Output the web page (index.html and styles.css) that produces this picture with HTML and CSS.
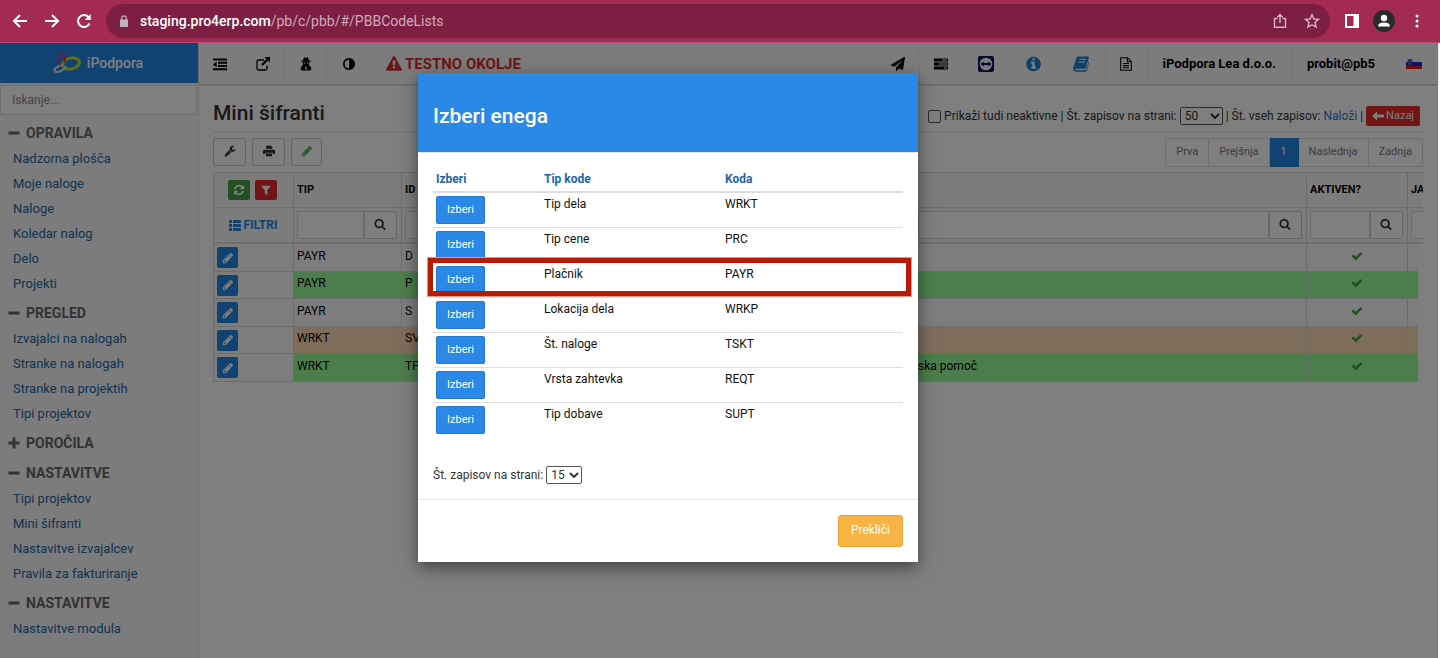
FILE: index.html
```html
<!DOCTYPE html>
<html lang="sl">
<head>
<meta charset="utf-8">
<title>Mini šifranti</title>
<link rel="stylesheet" href="styles.css">
</head>
<body>
<svg class="sprite" aria-hidden="true">
  <symbol id="pencil" viewBox="0 0 1792 1792"><path d="M491 1536l91-91-235-235-91 91v107h128v128h107zm523-928q0-22-22-22-10 0-17 7l-542 542q-7 7-7 17 0 22 22 22 10 0 17-7l542-542q7-7 7-17zm-54-192l416 416-832 832h-416v-416zm683 96q0 53-37 90l-166 166-416-416 166-165q36-38 90-38 53 0 91 38l235 234q37 39 37 91z"/></symbol>
  <symbol id="search" viewBox="0 0 1792 1792"><path d="M1216 832q0-185-131.5-316.5t-316.5-131.5-316.5 131.5-131.5 316.5 131.5 316.5 316.5 131.5 316.5-131.5 131.5-316.5zm512 832q0 52-38 90t-90 38q-54 0-90-38l-343-342q-179 124-399 124-143 0-273.5-55.5t-225-150-150-225-55.5-273.5 55.5-273.5 150-225 225-150 273.5-55.5 273.5 55.5 225 150 150 225 55.5 273.5q0 220-124 399l343 343q37 37 37 90z"/></symbol>
  <symbol id="check" viewBox="0 0 1792 1792"><path d="M1671 566q0 40-28 68l-724 724-136 136q-28 28-68 28t-68-28l-136-136-362-362q-28-28-28-68t28-68l136-136q28-28 68-28t68 28l294 295 656-657q28-28 68-28t68 28l136 136q28 28 28 68z"/></symbol>
  <symbol id="wrench" viewBox="0 0 1792 1792"><path d="M448 1472q0-26-19-45t-45-19-45 19-19 45 19 45 45 19 45-19 19-45zm644-420l-682 682q-37 37-90 37-52 0-91-37l-106-108q-38-36-38-90 0-53 38-91l681-681q39 98 114.5 173.5t173.5 114.5zm634-435q0 39-23 106-47 134-164.5 217.5t-258.5 83.5q-185 0-316.5-131.5t-131.5-316.5 131.5-316.5 316.5-131.5q58 0 121.5 16.5t107.5 46.5q16 11 16 28t-16 28l-293 169v224l193 107q5-3 79-48.5t135.5-81 70.5-35.5q15 0 23.5 10t8.5 25z"/></symbol>
  <symbol id="filter" viewBox="0 0 1792 1792"><path d="M1595 295q17 41-14 70l-493 493v742q0 42-39 59-13 5-25 5-27 0-45-19l-256-256q-19-19-19-45v-486l-493-493q-31-29-14-70 17-39 59-39h1280q42 0 59 39z"/></symbol>
  <symbol id="refresh" viewBox="0 0 1792 1792"><path d="M1639 1056q0 5-1 7-64 268-268 434.5t-478 166.5q-146 0-282.5-55t-243.5-157l-129 129q-19 19-45 19t-45-19-19-45v-448q0-26 19-45t45-19h448q26 0 45 19t19 45-19 45l-137 137q71 66 161 102t187 36q134 0 250-65t186-179q11-17 53-117 8-23 30-23h192q13 0 22.5 9.5t9.5 22.5zm25-800v448q0 26-19 45t-45 19h-448q-26 0-45-19t-19-45 19-45l138-138q-148-137-349-137-134 0-250 65t-186 179q-11 17-53 117-8 23-30 23h-199q-13 0-22.5-9.5t-9.5-22.5v-7q65-268 270-434.5t480-166.5q146 0 284 55.5t245 156.5l130-129q19-19 45-19t45 19 19 45z"/></symbol>
  <symbol id="warning" viewBox="0 0 1792 1792"><path d="M1024 1375v-190q0-14-9.5-23.5t-22.5-9.5h-192q-13 0-22.5 9.5t-9.5 23.5v190q0 14 9.5 23.5t22.5 9.5h192q13 0 22.5-9.5t9.5-23.5zm-2-374l18-459q0-12-10-19-13-11-24-11h-220q-11 0-24 11-10 7-10 21l17 457q0 10 10 16.5t24 6.5h185q14 0 23.5-6.5t10.5-16.5zm-14-934l768 1408q35 63-2 126-17 29-46.5 46t-63.5 17h-1536q-34 0-63.5-17t-46.5-46q-37-63-2-126l768-1408q17-31 47-49t65-18 65 18 47 49z"/></symbol>
  <symbol id="plane" viewBox="0 0 1792 1792"><path d="M1764 11q33 24 27 64l-256 1536q-5 29-32 45-14 8-31 8-11 0-24-5l-453-185-242 295q-18 23-49 23-13 0-22-4-19-7-30.5-23.5t-11.5-36.5v-349l864-1059-1069 925-395-162q-37-14-40-55-2-40 32-59l1664-960q15-9 32-9 20 0 36 11z"/></symbol>
  <symbol id="info" viewBox="0 0 1792 1792"><path d="M1152 1376v-160q0-14-9-23t-23-9h-96v-512q0-14-9-23t-23-9h-320q-14 0-23 9t-9 23v160q0 14 9 23t23 9h96v320h-96q-14 0-23 9t-9 23v160q0 14 9 23t23 9h448q14 0 23-9t9-23zm-128-896v-160q0-14-9-23t-23-9h-192q-14 0-23 9t-9 23v160q0 14 9 23t23 9h192q14 0 23-9t9-23zm640 416q0 209-103 385.5t-279.5 279.5-385.5 103-385.5-103-279.5-279.5-103-385.5 103-385.5 279.5-279.5 385.5-103 385.5 103 279.5 279.5 103 385.5z"/></symbol>
  <symbol id="contrast" viewBox="0 0 1792 1792"><path d="M896 1440v-1088q-148 0-273 73t-198 198-73 273 73 273 198 198 273 73zm768-544q0 209-103 385.5t-279.5 279.5-385.5 103-385.5-103-279.5-279.5-103-385.5 103-385.5 279.5-279.5 385.5-103 385.5 103 279.5 279.5 103 385.5z"/></symbol>
  <symbol id="outdent" viewBox="0 0 14 14"><path d="M0 1.500h14v2H0zM5 4.800h9v2H5zM5 8h9v2H5zM0 11.300h14v2H0zM0 7.400l3.600-2.800v5.600z"/></symbol>
  <symbol id="external" viewBox="0 0 14 14"><path d="M8.500 0H14v5.500L12 3.600 6.800 8.800 5.200 7.200 10.400 2z"/><path d="M8 3H2.500Q1 3 1 4.500v7Q1 13 2.500 13h7Q11 13 11 11.500V8.500" fill="none" stroke="currentColor" stroke-width="1.300"/></symbol>
  <symbol id="secret" viewBox="0 0 14 14"><path d="M4.500 1.200Q5 .3 7 .8 9 .3 9.500 1.200L10 3.500 12 4V4.800H2V4L4 3.500z"/><path d="M3.800 4.800h6.400v2.400L9.800 8.200Q12.300 9 12.300 12 12.300 13.500 10.800 13.500H3.200Q1.700 13.500 1.700 12 1.700 9 4.200 8.200L3.800 7.200z"/><path d="M4.600 5.700h1.800l-.4 1H5zM7.600 5.700h1.800l-.4 1H8zM6.500 9.500h1l.4 2.500-.9 1-.9-1z" fill="#f8f8f8"/></symbol>
  <symbol id="tasks" viewBox="0 0 14 12"><path d="M0 .5h14v3H0zM0 4.500h14v3H0zM0 8.500h14v3H0z"/><path d="M8 1.500h5v1H8zM5 5.500h8v1H5zM10 9.500h3v1h-3z" fill="#f8f8f8"/></symbol>
  <symbol id="viewer" viewBox="0 0 16 16"><rect width="16" height="16" rx="2" fill="#0c0c5c"/><circle cx="8" cy="8" r="6.300" fill="#f8f8f8"/><path d="M2.500 8l3.300-2.500V7h4.400V5.500L13.500 8l-3.300 2.500V9H5.800v1.500z" fill="#0c0c5c"/></symbol>
  <symbol id="book" viewBox="0 0 16 16"><path d="M5.500.5H15q1.200.2.800 1.500l-3 9.500q-.4 1.200-1.600 1.200H3q-1 0-1 .7 0 .8 1.200.8h9q.8 0 1-.8L16 4.500v2L13.800 14.500Q13.500 15.700 12 15.700H3Q.8 15.700.3 13.500q-.3-1 0-2L3.500 1.800Q4 .5 5.500.5z"/><path d="M6.300 3.300h7M5.400 6h7" stroke="#f8f8f8"/></symbol>
  <symbol id="doc" viewBox="0 0 12 14"><path d="M1 .7h6.500L11.300 4.500V13.300H.7V.7zM7.300.7v4h4M3 6.500h6M3 8.600h6M3 10.700h6" fill="none" stroke="currentColor" stroke-width="1.100"/></symbol>
  <symbol id="print" viewBox="0 0 14 14"><path d="M3.500 1h6l1.500 1.500V4.500H3.500zM1.500 5.500h11Q14 5.500 14 7v3.500h-2.500V9h-9v1.500H0V7Q0 5.500 1.500 5.500zM3.500 10h7v3h-7z"/></symbol>
  <symbol id="list" viewBox="0 0 12 11"><path d="M0 0h3v3H0zM4 0h8v3H4zM0 4h3v3H0zM4 4h8v3H4zM0 8h3v3H0zM4 8h8v3H4z"/></symbol>
  <symbol id="back" viewBox="0 0 12 10"><path d="M0 5l5-4.500v3h7v3H5v3z"/></symbol>
  <symbol id="minus" viewBox="0 0 12 12"><path d="M1 4.500h10q.5 0 .5.500v2q0 .5-.5.500H1q-.5 0-.5-.5V5q0-.5.500-.5z"/></symbol>
  <symbol id="plus" viewBox="0 0 12 12"><path d="M4.500.5h3v4h4v3h-4v4h-3v-4h-4v-3h4z"/></symbol>
</svg>

<header class="browser">
  <button class="chrome-btn" aria-label="Nazaj"><svg viewBox="0 0 16 16"><path d="M15 8H2M8 2L2 8l6 6"/></svg></button>
  <button class="chrome-btn" aria-label="Naprej"><svg viewBox="0 0 16 16"><path d="M1 8h13M8 2l6 6-6 6"/></svg></button>
  <button class="chrome-btn" aria-label="Osveži"><svg viewBox="0 0 16 16"><path d="M13.500 10.500A6 6 0 1 1 12.500 4L14 5.600"/><path d="M14.700 1v6h-6z" fill="#fff" stroke="none"/></svg></button>
  <div class="address">
    <svg class="lock" viewBox="0 0 8 12"><path d="M0 4.500h8V12H0z" fill="#b9b3ba"/><path d="M1.800 5V3a2.200 2.200 0 0 1 4.400 0v2" fill="none" stroke="#b9b3ba" stroke-width="1.200"/></svg>
    <span class="url"><span class="host">staging.pro4erp.com</span>/pb/c/pbb/#/PBBCodeLists</span>
    <button class="pill-btn" aria-label="Deli"><svg viewBox="0 0 14 16"><path d="M4.500 5.500h-3v8.700h11V5.500h-3M7 10V2M4.300 4.200L7 1.500l2.700 2.700" /></svg></button>
    <button class="pill-btn" aria-label="Zaznamek"><svg viewBox="0 0 16 16"><path d="M8 1.700l1.900 4.300 4.700.4-3.600 3.100 1.100 4.600L8 11.700l-4.100 2.400L5 9.500 1.400 6.400 6.100 6z"/></svg></button>
  </div>
  <button class="chrome-btn panel" aria-label="Stranska plošča"><svg viewBox="0 0 14 14"><path d="M1 1h12v12H1z"/><path d="M8.500 0H14v14H8.500z" fill="#fff" stroke="none"/></svg></button>
  <button class="avatar" aria-label="Profil"><svg viewBox="0 0 22 22"><circle cx="11" cy="11" r="11" fill="#2b2b2d"/><circle cx="11" cy="8" r="3.200" fill="#fff"/><path d="M5 16.500q0-4 6-4t6 4z" fill="#fff"/></svg></button>
  <button class="chrome-btn dots" aria-label="Meni"><svg viewBox="0 0 4 14"><g fill="#fff" stroke="none"><circle cx="2" cy="2" r="1.500"/><circle cx="2" cy="7" r="1.500"/><circle cx="2" cy="12" r="1.500"/></g></svg></button>
</header>

<div class="app">
  <aside class="sidebar">
    <a class="brand" href="#">
      <svg viewBox="0 0 28 20"><ellipse cx="18" cy="10.500" rx="8.500" ry="5.500" transform="rotate(-14 18 10.500)" fill="none" stroke="#c4d82c" stroke-width="3"/><path d="M13 13C11 18 5 20 2 18.500 0 16.500 4 12.500 10 12" fill="none" stroke="#e4e8ec" stroke-width="2"/><path d="M7.500 12C4 8 4.500 1.500 8.500 1.200c3.500 0 4 3 3 7.800" fill="none" stroke="#d43a74" stroke-width="2"/></svg>
      iPodpora
    </a>
    <input class="side-search" type="text" placeholder="Iskanje..." aria-label="Iskanje">
    <nav class="menu">
      <h2><svg><use href="#minus"/></svg>OPRAVILA</h2>
      <a href="#">Nadzorna plošča</a><a href="#">Moje naloge</a><a href="#">Naloge</a><a href="#">Koledar nalog</a><a href="#">Delo</a><a href="#">Projekti</a>
      <h2><svg><use href="#minus"/></svg>PREGLED</h2>
      <a href="#">Izvajalci na nalogah</a><a href="#">Stranke na nalogah</a><a href="#">Stranke na projektih</a><a href="#">Tipi projektov</a>
      <h2><svg><use href="#plus"/></svg>POROČILA</h2>
      <h2><svg><use href="#minus"/></svg>NASTAVITVE</h2>
      <a href="#">Tipi projektov</a><a href="#">Mini šifranti</a><a href="#">Nastavitve izvajalcev</a><a href="#">Pravila za fakturiranje</a>
      <h2><svg><use href="#minus"/></svg>NASTAVITVE</h2>
      <a href="#">Nastavitve modula</a>
    </nav>
  </aside>

  <div class="content">
    <nav class="topbar">
      <a href="#" aria-label="Skrij meni"><svg class="i14"><use href="#outdent"/></svg></a>
      <a href="#" aria-label="Odpri"><svg class="i14"><use href="#external"/></svg></a>
      <a href="#" aria-label="Uporabnik"><svg class="i14"><use href="#secret"/></svg></a>
      <a href="#" aria-label="Kontrast"><svg class="i14"><use href="#contrast"/></svg></a>
      <span class="env"><svg class="i16"><use href="#warning"/></svg>TESTNO OKOLJE</span>
      <a href="#" aria-label="Pošlji"><svg class="i14"><use href="#plane"/></svg></a>
      <a href="#" aria-label="Opravila"><svg class="i14"><use href="#tasks"/></svg></a>
      <a href="#" class="wide" aria-label="Oddaljena pomoč"><svg class="i16"><use href="#viewer"/></svg></a>
      <a href="#" class="wide blue" aria-label="Informacije"><svg class="i18"><use href="#info"/></svg></a>
      <a href="#" class="wide blue" aria-label="Priročnik"><svg class="i16"><use href="#book"/></svg></a>
      <a href="#" aria-label="Dokument"><svg class="i14"><use href="#doc"/></svg></a>
      <a href="#" class="wide">iPodpora Lea d.o.o.</a>
      <a href="#" class="wide">probit@pb5</a>
      <a href="#" aria-label="Slovenščina"><svg class="flag" viewBox="0 0 16 11"><path d="M0 0h16v4H0z" fill="#f0f0f0"/><path d="M0 4h16v4H0z" fill="#1030d0"/><path d="M0 8h16v3H0z" fill="#e01818"/><path d="M2 1.500h4v3.500q0 1.500-2 2.500-2-1-2-2.500z" fill="#4060d8" stroke="#e01818" stroke-width=".5"/></svg></a>
    </nav>

    <main class="main">
      <div class="title-row">
        <h1>Mini šifranti</h1>
        <div class="options">
          <input type="checkbox" id="inactive"><label for="inactive">Prikaži tudi neaktivne</label>
          <span>|</span>
          <label for="per-page">Št. zapisov na strani:</label>
          <span class="select"><select id="per-page"><option>50</option></select><svg viewBox="0 0 10 6"><path d="M1 1l4 4 4-4"/></svg></span>
          <span>| Št. vseh zapisov:</span>
          <a href="#">Naloži</a>
          <span>|</span>
          <button class="back"><svg><use href="#back"/></svg>Nazaj</button>
        </div>
      </div>

      <div class="tools">
        <div class="tool-btns">
          <button aria-label="Nastavitve"><svg><use href="#wrench"/></svg></button>
          <button aria-label="Natisni"><svg><use href="#print"/></svg></button>
          <button class="edit" aria-label="Uredi"><svg><use href="#pencil"/></svg></button>
        </div>
        <div class="pages"><button>Prva</button><button>Prejšnja</button><button class="current">1</button><button>Naslednja</button><button>Zadnja</button></div>
      </div>

      <div class="grid-head">
        <table class="grid">
          <colgroup><col class="c-act"><col class="c-tip"><col class="c-id"><col><col class="c-on"><col class="c-last"></colgroup>
          <tr>
            <th><div class="acts"><button class="green" aria-label="Osveži"><svg><use href="#refresh"/></svg></button><button class="red" aria-label="Počisti filter"><svg><use href="#filter"/></svg></button></div></th>
            <th>TIP</th><th>ID</th><th></th><th>AKTIVEN?</th><th>JA</th>
          </tr>
          <tr>
            <td><a class="filters" href="#"><svg><use href="#list"/></svg>FILTRI</a></td>
            <td><div class="find"><input aria-label="Tip"><button aria-label="Išči"><svg><use href="#search"/></svg></button></div></td>
            <td><div class="find"><input aria-label="ID"><button aria-label="Išči"><svg><use href="#search"/></svg></button></div></td>
            <td><div class="find"><input aria-label="Naziv"><button aria-label="Išči"><svg><use href="#search"/></svg></button></div></td>
            <td><div class="find"><input aria-label="Aktiven"><button aria-label="Išči"><svg><use href="#search"/></svg></button></div></td>
            <td><div class="find"><input aria-label="Ja"><button aria-label="Išči"><svg><use href="#search"/></svg></button></div></td>
          </tr>
        </table>
      </div>
      <div class="grid-body">
        <table class="grid rows">
          <colgroup><col class="c-act"><col class="c-tip"><col class="c-id"><col><col class="c-on"><col class="c-last"></colgroup>
          <tr><td><button aria-label="Uredi"><svg><use href="#pencil"/></svg></button></td><td>PAYR</td><td>D</td><td></td><td class="ok"><svg><use href="#check"/></svg></td><td></td></tr>
          <tr class="g"><td><button aria-label="Uredi"><svg><use href="#pencil"/></svg></button></td><td>PAYR</td><td>P</td><td></td><td class="ok"><svg><use href="#check"/></svg></td><td></td></tr>
          <tr><td><button aria-label="Uredi"><svg><use href="#pencil"/></svg></button></td><td>PAYR</td><td>S</td><td></td><td class="ok"><svg><use href="#check"/></svg></td><td></td></tr>
          <tr class="o"><td><button aria-label="Uredi"><svg><use href="#pencil"/></svg></button></td><td>WRKT</td><td>SV</td><td></td><td class="ok"><svg><use href="#check"/></svg></td><td></td></tr>
          <tr class="g"><td><button aria-label="Uredi"><svg><use href="#pencil"/></svg></button></td><td>WRKT</td><td>TP</td><td>ska pomoč</td><td class="ok"><svg><use href="#check"/></svg></td><td></td></tr>
        </table>
      </div>
    </main>
  </div>

  <div class="backdrop">
    <section class="modal" role="dialog" aria-labelledby="dlg-title">
      <header class="modal-head"><h2 id="dlg-title">Izberi enega</h2></header>
      <div class="modal-body">
        <table class="pick">
          <colgroup><col class="p-btn"><col class="p-name"><col></colgroup>
          <thead><tr><th>Izberi</th><th>Tip kode</th><th>Koda</th></tr></thead>
          <tbody>
            <tr><td><button>Izberi</button></td><td>Tip dela</td><td>WRKT</td></tr>
            <tr><td><button>Izberi</button></td><td>Tip cene</td><td>PRC</td></tr>
            <tr class="marked"><td><button>Izberi</button></td><td>Plačnik</td><td>PAYR</td></tr>
            <tr><td><button>Izberi</button></td><td>Lokacija dela</td><td>WRKP</td></tr>
            <tr><td><button>Izberi</button></td><td>Št. naloge</td><td>TSKT</td></tr>
            <tr><td><button>Izberi</button></td><td>Vrsta zahtevka</td><td>REQT</td></tr>
            <tr><td><button>Izberi</button></td><td>Tip dobave</td><td>SUPT</td></tr>
          </tbody>
        </table>
        <div class="page-size">
          <label for="dlg-size">Št. zapisov na strani:</label>
          <span class="select small"><select id="dlg-size"><option>15</option></select><svg viewBox="0 0 10 6"><path d="M1 1l4 4 4-4"/></svg></span>
        </div>
      </div>
      <footer class="modal-foot"><button>Prekliči</button></footer>
    </section>
  </div>
</div>
</body>
</html>
```
FILE: styles.css
```css
* { box-sizing: border-box; }
body {
  margin: 0;
  min-height: 100vh;
  display: flex;
  flex-direction: column;
  overflow: hidden;
  background: #fff;
  color: #333;
  font: 12px/18px Roboto, "Liberation Sans", sans-serif;
}
button, input, select { font: inherit; color: inherit; margin: 0; }
button { padding: 0; border: 0; background: none; display: flex; align-items: center; justify-content: center; }
a { color: #1976d2; text-decoration: none; }
svg { display: block; fill: currentColor; flex: none; }
h1, h2 { margin: 0; font-weight: 500; }
.sprite { display: none; }

/* browser bar */
.browser {
  display: flex;
  align-items: center;
  height: 43px;
  padding: 0 19px 0 12px;
  background: #a32b52;
  border-bottom: 1px solid #bb4578;
}
.chrome-btn { width: 16px; height: 16px; margin-right: 16px; }
.chrome-btn svg { width: 16px; height: 16px; fill: none; stroke: #fff; stroke-width: 2; }
.address {
  flex: 1;
  display: flex;
  align-items: center;
  height: 34px;
  margin: 0 15px 0 -2px;
  padding: 0 10px 0 14px;
  border-radius: 17px;
  background: #7d1f42;
}
.lock { width: 8px; height: 12px; margin-right: 12px; }
.url { flex: 1; font-size: 14px; color: #d3a9bb; }
.host { color: #fff; font-weight: 500; }
.pill-btn { margin-left: 16px; }
.pill-btn svg { width: 16px; height: 16px; fill: none; stroke: #d9b4c5; stroke-width: 1.4; }
.panel { width: 14px; margin-right: 14px; }
.panel svg { width: 14px; height: 14px; }
.avatar svg { width: 22px; height: 22px; }
.dots { width: 4px; margin: 0 2px 0 20px; }
.dots svg { width: 4px; height: 14px; }

/* application frame */
.app { position: relative; flex: 1; display: flex; margin-right: 2px; background: #fff; }
.sidebar { width: 199px; flex: none; background: #f8f8f8; border-right: 1px solid #e4e4e4; }
.brand {
  display: flex;
  align-items: center;
  justify-content: center;
  gap: 6px;
  height: 40px;
  padding-right: 2px;
  background: #2186e4;
  color: #fff;
  font-size: 14px;
  font-weight: 500;
}
.brand svg { width: 28px; height: 20px; }
.side-search {
  display: block;
  width: calc(100% - 1px);
  height: 30px;
  margin-top: 2px;
  padding: 0 11px;
  border: 1px solid #d6dde6;
  background: #fff;
}
.side-search::placeholder { color: #8a8a8a; opacity: 1; }
.menu { padding-top: 1px; }
.menu h2 {
  display: flex;
  align-items: center;
  gap: 6px;
  height: 25px;
  margin-top: 5px;
  padding: 0 0 2px 8px;
  color: #666;
  font-size: 14px;
  font-weight: 700;
}
.menu h2 svg { width: 12px; height: 12px; }
.menu a { display: block; padding-left: 13px; line-height: 25px; font-size: 13px; color: #25669f; }

.content { flex: 1; min-width: 0; }
.topbar {
  display: flex;
  height: 41px;
  background: #f8f8f8;
  box-shadow: 0 1px 2px #bbb;
  color: #000;
}
.topbar a {
  display: flex;
  align-items: center;
  padding: 0 14px;
  border-right: 1px solid #eee;
  color: #000;
  font-size: 13px;
  font-weight: 700;
}
.topbar a:last-child { padding: 0 16px 0 15px; border: 0; }
.topbar a.wide { padding: 0 15px; }
.topbar a.blue { color: #1f80cc; }
.env {
  flex: 1;
  display: flex;
  align-items: center;
  gap: 3px;
  padding-left: 15px;
  color: #d82a2a;
  font-size: 15px;
  font-weight: 700;
}
.i14 { width: 14px; height: 14px; }
.i16 { width: 16px; height: 16px; }
.i18 { width: 17px; height: 18px; }
.flag { width: 16px; height: 11px; }

.main { padding: 15px 15px 0 14px; }
.title-row {
  display: flex;
  justify-content: space-between;
  align-items: flex-end;
  height: 34px;
  padding-bottom: 5px;
  border-bottom: 2px solid #eee;
}
h1 { font-size: 21px; line-height: 26px; }
.options { display: flex; align-items: center; gap: 3px; padding-right: 3px; }
.options input {
  appearance: none;
  width: 13px;
  height: 13px;
  border: 1px solid #555;
  border-radius: 2px;
  background: #fff;
}
.select { position: relative; display: block; }
.select select {
  appearance: none;
  display: block;
  width: 43px;
  height: 18px;
  padding: 0 0 0 4px;
  border: 1px solid #555;
  border-radius: 2px;
  background: #fff;
  line-height: 16px;
}
.select.small select { width: 36px; }
.select svg { position: absolute; right: 3px; top: 6px; width: 10px; height: 6px; fill: none; stroke: #333; stroke-width: 2; pointer-events: none; }
.back {
  gap: 2px;
  height: 20px;
  padding: 0 6px;
  border-radius: 2px;
  background: #e22b2b;
  color: #fff;
  font-size: 11px;
}
.back svg { width: 12px; height: 10px; }

.tools { display: flex; justify-content: space-between; padding: 5px 0; }
.tool-btns { display: flex; gap: 6px; }
.tool-btns button { width: 33px; height: 28px; padding-bottom: 2px; border: 1px solid #ccc; border-radius: 2px; background: #fff; }
.tool-btns .edit { width: 31px; color: #4caf50; }
.tool-btns svg { width: 12px; height: 12px; }
.pages { display: flex; }
.pages button {
  height: 29px;
  padding: 0 10px 2px;
  border: 1px solid #ddd;
  border-left-width: 0;
  background: #fff;
  color: #777;
  font-size: 11px;
}
.pages button:first-child { border-left-width: 1px; border-radius: 2px 0 0 2px; }
.pages button:last-child { border-radius: 0 2px 2px 0; }
.pages .current { width: 29px; border-color: #2186e4; background: #2186e4; color: #fff; }

/* data grid */
.grid-head { overflow: hidden; border-bottom: 2px solid #ddd; }
.grid-body { overflow: hidden; margin-right: 5px; }
.grid { table-layout: fixed; width: calc(100% + 84px); border-collapse: separate; border-spacing: 0; color: #000; }
.rows { width: calc(100% + 89px); }
.c-act { width: 80px; }
.c-tip { width: 108px; }
.c-id { width: 513px; }
.c-on { width: 101px; }
.c-last { width: 100px; }
.grid th, .grid td { padding: 0 3px; border: solid #d8d8d8; border-width: 0 0 1px 1px; text-align: left; }
.grid th { height: 36px; border-top-width: 1px; background: #f8f8f8; font-size: 11px; }
.grid-head td { height: 34px; padding-right: 4px; border-bottom: 0; background: #f8f8f8; }
.acts { display: flex; justify-content: center; gap: 5px; padding-right: 2px; }
.acts button { width: 22px; height: 20px; border-radius: 2px; color: #fff; }
.acts .green { background: #43a047; }
.acts .red { background: #e22b2b; }
.acts svg, .find svg { width: 12px; height: 12px; }
.filters { display: flex; align-items: center; justify-content: center; gap: 3px; color: #2186e4; font-weight: 700; }
.filters svg { width: 12px; height: 11px; }
.find { display: flex; }
.find input { flex: 1; min-width: 0; height: 28px; border: 1px solid #d3d9e2; background: #fff; }
.find button { width: 33px; height: 28px; padding: 0 2px 2px 0; border: 1px solid #ccc; border-radius: 0 2px 2px 0; background: #fff; color: #333; }
.rows td { height: 28px; padding-bottom: 4px; background: #fbfbfb; }
.rows tr:nth-child(even) td { height: 27px; }
.grid.rows td:first-child { padding-bottom: 0; }
.rows button { width: 21px; height: 21px; border-radius: 2px; background: #2186e4; color: #fff; }
.rows button svg { width: 12px; height: 12px; }
.rows .g td:not(:first-child) { background: #98fb98; }
.rows .o td:not(:first-child) { background: #ffdab9; }
.ok svg { width: 12px; height: 12px; margin: auto; color: #43a047; }

/* dialog */
.backdrop {
  position: absolute;
  inset: 0;
  display: flex;
  justify-content: center;
  align-items: flex-start;
  padding: 30px 102px 0 0;
  background: rgba(0, 0, 0, .5);
}
.modal { width: 500px; background: #fff; box-shadow: 0 5px 15px rgba(0, 0, 0, .5); }
.modal-head { padding: 30px 15px 23px; background: #2a88e6; border-bottom: 1px solid #e5e5e5; color: #fff; }
.modal-head h2 { font-size: 21px; line-height: 26px; }
.modal-body { padding: 14px 15px 15px; }
.pick { table-layout: fixed; width: 100%; border-collapse: separate; border-spacing: 0; color: #111; }
.p-btn { width: 108px; }
.p-name { width: 181px; }
.pick th { height: 26px; padding: 0 3px; border-bottom: 2px solid #ddd; color: #1c65ab; text-align: left; font-weight: 700; }
.pick td { height: 35px; padding: 2px 3px; border-bottom: 1px solid #ddd; vertical-align: top; }
.pick tr:last-child td { border-bottom: 0; }
.pick button { width: 49px; height: 28px; margin-top: 1px; padding-bottom: 1px; border: 1px solid #2278cf; border-radius: 2px; background: #2a88e6; color: #fff; font-size: 11px; }
.marked { position: relative; }
.marked td:first-child::after {
  content: "";
  position: absolute;
  inset: -5px -8px 2px -5px;
  border: 5px solid #b71c00;
  outline: 1px solid #dd9a90;
}
.page-size { display: flex; align-items: center; gap: 3px; padding-top: 28px; }
.modal-foot { display: flex; justify-content: flex-end; padding: 15px; border-top: 1px solid #e5e5e5; }
.modal-foot button { height: 32px; padding: 0 12px 2px; border: 1px solid #e8a33a; border-radius: 3px; background: #f7b344; color: #fff; }
```
